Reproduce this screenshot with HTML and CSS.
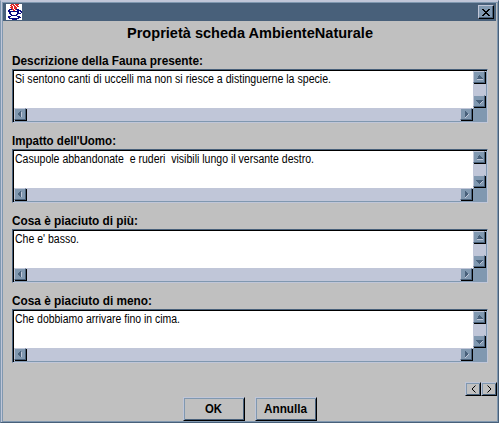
FILE: index.html
```html
<!DOCTYPE html>
<html lang="it">
<head>
<meta charset="utf-8">
<title>Proprietà scheda AmbienteNaturale</title>
<link rel="stylesheet" href="styles.css">
</head>
<body>
<svg class="defs" aria-hidden="true">
  <defs>
    <symbol id="up" viewBox="0 0 12 12"><path fill="#48607a" d="M6 4h1v1h1v1h1v1h1v1H4V7h1V5h1z"/><path fill="#c0c6d8" d="M4 8h6v1H4z"/></symbol>
    <symbol id="down" viewBox="0 0 12 12"><path fill="#48607a" d="M3 5h7v1H9v1H8v1H7v1H6V8H5V7H4V6H3z"/><path fill="#c0c6d8" d="M9 6h1v1H9v1H8v1H7V8h1V7h1z"/></symbol>
    <symbol id="left" viewBox="0 0 12 12"><path fill="#48607a" d="M7 3v6H6V8H5V7H4V5h1V4h1V3z"/><path fill="#c0c6d8" d="M7 4h1v5H7z"/></symbol>
    <symbol id="right" viewBox="0 0 12 12"><path fill="#48607a" d="M5 3h1v1h1v1h1v2H7v1H6v1H5z"/><path fill="#c0c6d8" d="M5 9h1V8h1V7h1V6h1v1H8v1H7v1H6v1H5z"/></symbol>
  </defs>
</svg>
<main class="window">
  <header class="titlebar">
    <svg class="java" viewBox="0 0 16 16" shape-rendering="crispEdges">
      <path fill="#fff" d="M0 0h16v16H0z"/>
      <path fill="none" stroke="#e02828" d="M5 .5h3M9 .5h4M4 1.5h2M7 1.5h2M10 1.5h2M5 2.5h2M8 2.5h2M11 2.5h2M4 3.5h3M8 3.5h3M5 4.5h2M8 4.5h3M6 5.5h2M9 5.5h1M7 6.5h2"/>
      <path fill="none" stroke="#080880" d="M3 5.5h3M10 5.5h3M2 6.5h2M11 6.5h4M2 7.5h11M14 7.5h2M3 8.5h2M11 8.5h2M15 8.5h1M3 9.5h2M11 9.5h4M4 10.5h2M10 10.5h2M5 11.5h6M2 12.5h3M11 12.5h3M2 13.5h2M12 13.5h3M3 14.5h10M6 15.5h5"/>
    </svg>
    <button class="close" aria-label="Chiudi"><svg viewBox="0 0 8 7" shape-rendering="crispEdges"><path d="M0 0h2v1h1v1h2V1h1V0h2v1H7v1H6v1H5v1h1v1h1v1h1v1H6V6H5V5H3v1H2v1H0V6h1V5h1V4h1V3H2V2H1V1H0z"/></svg></button>
  </header>
  <h1><svg width="250" height="22"><text x="2" y="14" textLength="246" lengthAdjust="spacingAndGlyphs">Proprietà scheda AmbienteNaturale</text></svg></h1>
  <section class="field">
    <h2><svg><text x="0" y="12" textLength="191" lengthAdjust="spacingAndGlyphs">Descrizione della Fauna presente:</text></svg></h2>
    <div class="area">
      <div class="content"><svg><text x="1" y="12" textLength="316" lengthAdjust="spacingAndGlyphs">Si sentono canti di uccelli ma non si riesce a distinguerne la specie.</text></svg></div>
      <div class="vbar"><i><svg><use href="#up"/></svg></i><i><svg><use href="#down"/></svg></i></div>
      <div class="hbar"><i><svg><use href="#left"/></svg></i><i><svg><use href="#right"/></svg></i></div>
    </div>
  </section>
  <section class="field">
    <h2><svg><text x="0" y="12" textLength="104" lengthAdjust="spacingAndGlyphs">Impatto dell'Uomo:</text></svg></h2>
    <div class="area">
      <div class="content"><svg><text x="1" y="12" textLength="299" lengthAdjust="spacingAndGlyphs">Casupole abbandonate&nbsp; e ruderi&nbsp; visibili lungo il versante destro.</text></svg></div>
      <div class="vbar"><i><svg><use href="#up"/></svg></i><i><svg><use href="#down"/></svg></i></div>
      <div class="hbar"><i><svg><use href="#left"/></svg></i><i><svg><use href="#right"/></svg></i></div>
    </div>
  </section>
  <section class="field">
    <h2><svg><text x="0" y="12" textLength="126" lengthAdjust="spacingAndGlyphs">Cosa è piaciuto di più:</text></svg></h2>
    <div class="area">
      <div class="content"><svg><text x="1" y="12" textLength="64" lengthAdjust="spacingAndGlyphs">Che e' basso.</text></svg></div>
      <div class="vbar"><i><svg><use href="#up"/></svg></i><i><svg><use href="#down"/></svg></i></div>
      <div class="hbar"><i><svg><use href="#left"/></svg></i><i><svg><use href="#right"/></svg></i></div>
    </div>
  </section>
  <section class="field">
    <h2><svg><text x="0" y="12" textLength="140" lengthAdjust="spacingAndGlyphs">Cosa è piaciuto di meno:</text></svg></h2>
    <div class="area">
      <div class="content"><svg><text x="1" y="12" textLength="165" lengthAdjust="spacingAndGlyphs">Che dobbiamo arrivare fino in cima.</text></svg></div>
      <div class="vbar"><i><svg><use href="#up"/></svg></i><i><svg><use href="#down"/></svg></i></div>
      <div class="hbar"><i><svg><use href="#left"/></svg></i><i><svg><use href="#right"/></svg></i></div>
    </div>
  </section>
  <nav class="pager">
    <button aria-label="Precedente"><svg viewBox="0 0 5 8"><path d="M4.500 .5L1 4l3.500 3.500"/></svg></button>
    <button aria-label="Successivo"><svg viewBox="0 0 5 8"><path d="M.5 .5L4 4 .5 7.500"/></svg></button>
  </nav>
  <footer class="actions">
    <button><svg width="17" height="14"><text x="0" y="11" textLength="17" lengthAdjust="spacingAndGlyphs">OK</text></svg></button>
    <button><svg width="43" height="14"><text x="0" y="11" textLength="43" lengthAdjust="spacingAndGlyphs">Annulla</text></svg></button>
  </footer>
</main>
</body>
</html>
```
FILE: styles.css
```css
* { box-sizing: border-box; }
body { margin: 0; overflow: hidden; font-family: "Liberation Sans", Arial, sans-serif; }
svg { display: block; overflow: visible; }
.defs { width: 0; height: 0; position: absolute; }
.window {
  width: 499px;
  height: 423px;
  display: flex;
  flex-direction: column;
  background: #c0c0c0;
  border: 1px solid;
  border-color: #c0c6d8 #48607a #48607a #8098b0;
  box-shadow: inset 1px 1px #c0c6d8, inset 2px 2px #8098b0, inset -1px -1px #8098b0;
  padding: 2px 2px 1px;
}
.titlebar {
  height: 18px;
  flex: none;
  background: #48607a;
  display: flex;
  justify-content: space-between;
  padding: 1px 2px 0 3px;
}
.java { width: 16px; height: 16px; }
button { margin: 0; padding: 0; font: inherit; color: #000; }
.close {
  width: 16px;
  height: 14px;
  margin-top: 1px;
  display: flex;
  align-items: center;
  justify-content: center;
  background: #8098b0;
  border: 1px solid;
  border-color: #c0c6d8 #000 #000 #c0c6d8;
  box-shadow: inset -1px -1px #48607a;
}
.close svg { width: 8px; height: 7px; }
h1 { height: 32px; margin: 0; padding-top: 3px; display: flex; justify-content: center; flex: none; line-height: 18px; font-size: 15px; }
h1 text { font-weight: bold; }
.field { height: 80px; flex: none; padding: 0 8px 0 9px; }
h2 { margin: 0; height: 16px; }
h2 svg { width: 300px; height: 16px; }
h2 text { font-size: 12px; font-weight: bold; }
.area {
  width: 476px;
  height: 54px;
  display: grid;
  grid-template-columns: 1fr 13px;
  grid-template-rows: 1fr 13px;
  background: #8098b0;
  border: 1px solid;
  border-color: #48607a #c0c6d8 #c0c6d8 #48607a;
  box-shadow: inset 1px 1px #000, inset -1px -1px #8098b0;
  padding: 1px;
}
.content { background: #fff; min-height: 0; }
.content svg { width: 440px; height: 20px; }
.content text { font-size: 12px; }
.vbar, .hbar { display: flex; justify-content: space-between; background: #c0c6d8; }
.vbar { flex-direction: column; }
i {
  width: 12px;
  height: 12px;
  background: #8098b0;
  border: 1px solid;
  border-color: #c0c6d8 #48607a #48607a #c0c6d8;
  box-shadow: 1px 1px #000;
  display: block;
}
i svg { width: 12px; height: 12px; margin: -1px; shape-rendering: crispEdges; }
.vbar i:last-child { margin-bottom: 1px; }
.hbar i:last-child { margin-right: 1px; }
.pager { margin: 9px -1px 0 0; height: 14px; display: flex; justify-content: flex-end; flex: none; }
.pager button, .actions button {
  display: flex;
  align-items: center;
  justify-content: center;
  background: #c0c0c0;
  border: 1px solid;
  border-color: #c0c6d8 #000 #000 #c0c6d8;
  box-shadow: inset 1px 1px #8098b0, inset -1px -1px #48607a;
}
.pager button { width: 16px; height: 14px; }
.pager svg { width: 5px; height: 8px; fill: none; stroke: #000; }
.actions { display: flex; justify-content: center; gap: 10px; margin-top: 1px; }
.actions button { width: 62px; height: 24px; }
.actions text { font-size: 12px; font-weight: bold; }
```
